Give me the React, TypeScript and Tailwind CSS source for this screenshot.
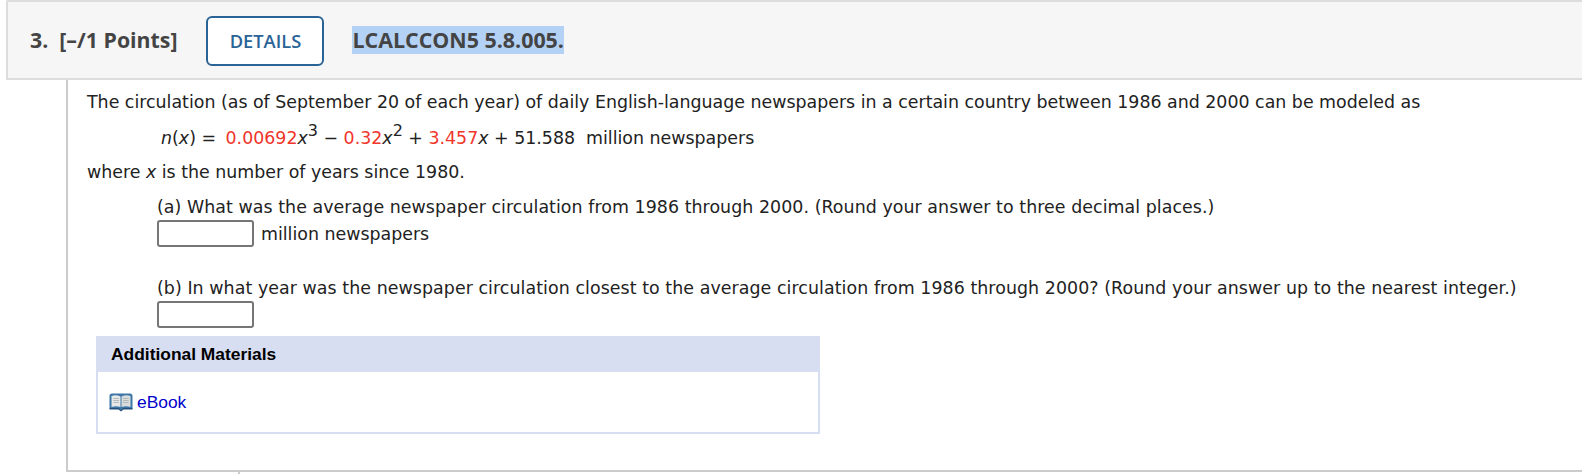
function BookIcon() {
  return (
    <svg width="24" height="19" viewBox="0 0 24 19" className="shrink-0">
      <path d="M0.5 3 Q0.5 0.5 3 0.5 H21 Q23.5 0.5 23.5 3 V15.5 H14 L12 17.5 L10 15.5 H0.5 Z" fill="#3f76a8" />
      <path d="M2.5 3 Q7 1.5 11.5 3.5 V14 Q7 12.5 2.5 14 Z" fill="#e6e8e8" />
      <path d="M21.5 3 Q17 1.5 12.5 3.5 V14 Q17 12.5 21.5 14 Z" fill="#d8dcdd" />
      <path d="M4.5 5.5 H10 M4.5 7.5 H10 M4.5 9.5 H10 M14 5.5 H19.5 M14 7.5 H19.5 M14 9.5 H19.5" stroke="#b3b9bc" strokeWidth="1" />
      <path d="M0.5 15 H10 L12 17 L14 15 H23.5 V16.5 H14.5 L12 18.5 L9.5 16.5 H0.5 Z" fill="#24507c" />
    </svg>
  );
}

const question = "font-['DejaVu_Sans',Verdana,sans-serif] text-[17.4px] leading-[26px] text-[#222]";

function AnswerBox() {
  return <input type="text" className="block w-[97px] h-[27px] rounded-[3px] border-2 border-[#767676] bg-white" />;
}

export default function App() {
  return (
    <div className="w-[1582px] h-[474px] overflow-hidden bg-white">
      {/* header */}
      <div className="ml-[6px] h-[80px] bg-[#f6f6f6] border-2 border-r-0 border-[#dddddd] rounded-tl-[2px] flex items-center pl-[22px] font-['Open_Sans',sans-serif] font-bold text-[#444]">
        <span className="text-[21.3px] whitespace-pre">3.  [–/1 Points]</span>
        <button className="ml-[29px] mt-[1px] w-[118px] h-[50px] bg-white border-2 border-[#2a6496] rounded-[6px] text-[#2a6496] text-[18.3px] font-semibold">
          DETAILS
        </button>
        <span className="ml-[28px] text-[21.4px] leading-[28px] bg-[#b4d2f5]">LCALCCON5 5.8.005.</span>
      </div>

      {/* body */}
      <div className="ml-[66px] h-[392px] border-l-2 border-b-2 border-[#cccccc] pl-[19px] pt-[9px]">
        <div className={question}>
          <p>The circulation (as of September 20 of each year) of daily English-language newspapers in a certain country between 1986 and 2000 can be modeled as</p>
          <p className="mt-[10px] ml-[74px] whitespace-pre">
            <i>n</i>(<i>x</i>) = <span className="ml-[4px] text-[#f0352b]">0.00692</span><i>x</i><sup className="text-[16px] leading-none">3</sup> − <span className="text-[#f0352b]">0.32</span><i>x</i><sup className="text-[16px] leading-none">2</sup> + <span className="text-[#f0352b]">3.457</span><i>x</i> + 51.588  million newspapers
          </p>
          <p className="mt-[8px]">where <i>x</i> is the number of years since 1980.</p>

          <div className="ml-[70px] mt-[9px]">
            <p className="tracking-[0.06px]">(a) What was the average newspaper circulation from 1986 through 2000. (Round your answer to three decimal places.)</p>
            <div className="flex items-center gap-[7px]">
              <AnswerBox />
              <span>million newspapers</span>
            </div>
            <p className="mt-[28px] tracking-[0.07px]">(b) In what year was the newspaper circulation closest to the average circulation from 1986 through 2000? (Round your answer up to the nearest integer.)</p>
            <AnswerBox />
          </div>
        </div>

        {/* additional materials */}
        <div className="ml-[9px] mt-[8px] w-[724px] h-[98px] border-2 border-[#d8def2] font-['Liberation_Sans',Arial,sans-serif]">
          <div className="h-[34px] pb-[2px] bg-[#d8def2] flex items-center pl-[13px] text-[17.4px] font-bold text-black">Additional Materials</div>
          <div className="flex items-center gap-[4px] pl-[11px] pt-[17px] text-[17.4px] text-[#0000cc]">
            <BookIcon />
            <span>eBook</span>
          </div>
        </div>
      </div>
      <div className="ml-[238px] w-[2px] h-[2px] bg-[#cccccc]" />
    </div>
  );
}
